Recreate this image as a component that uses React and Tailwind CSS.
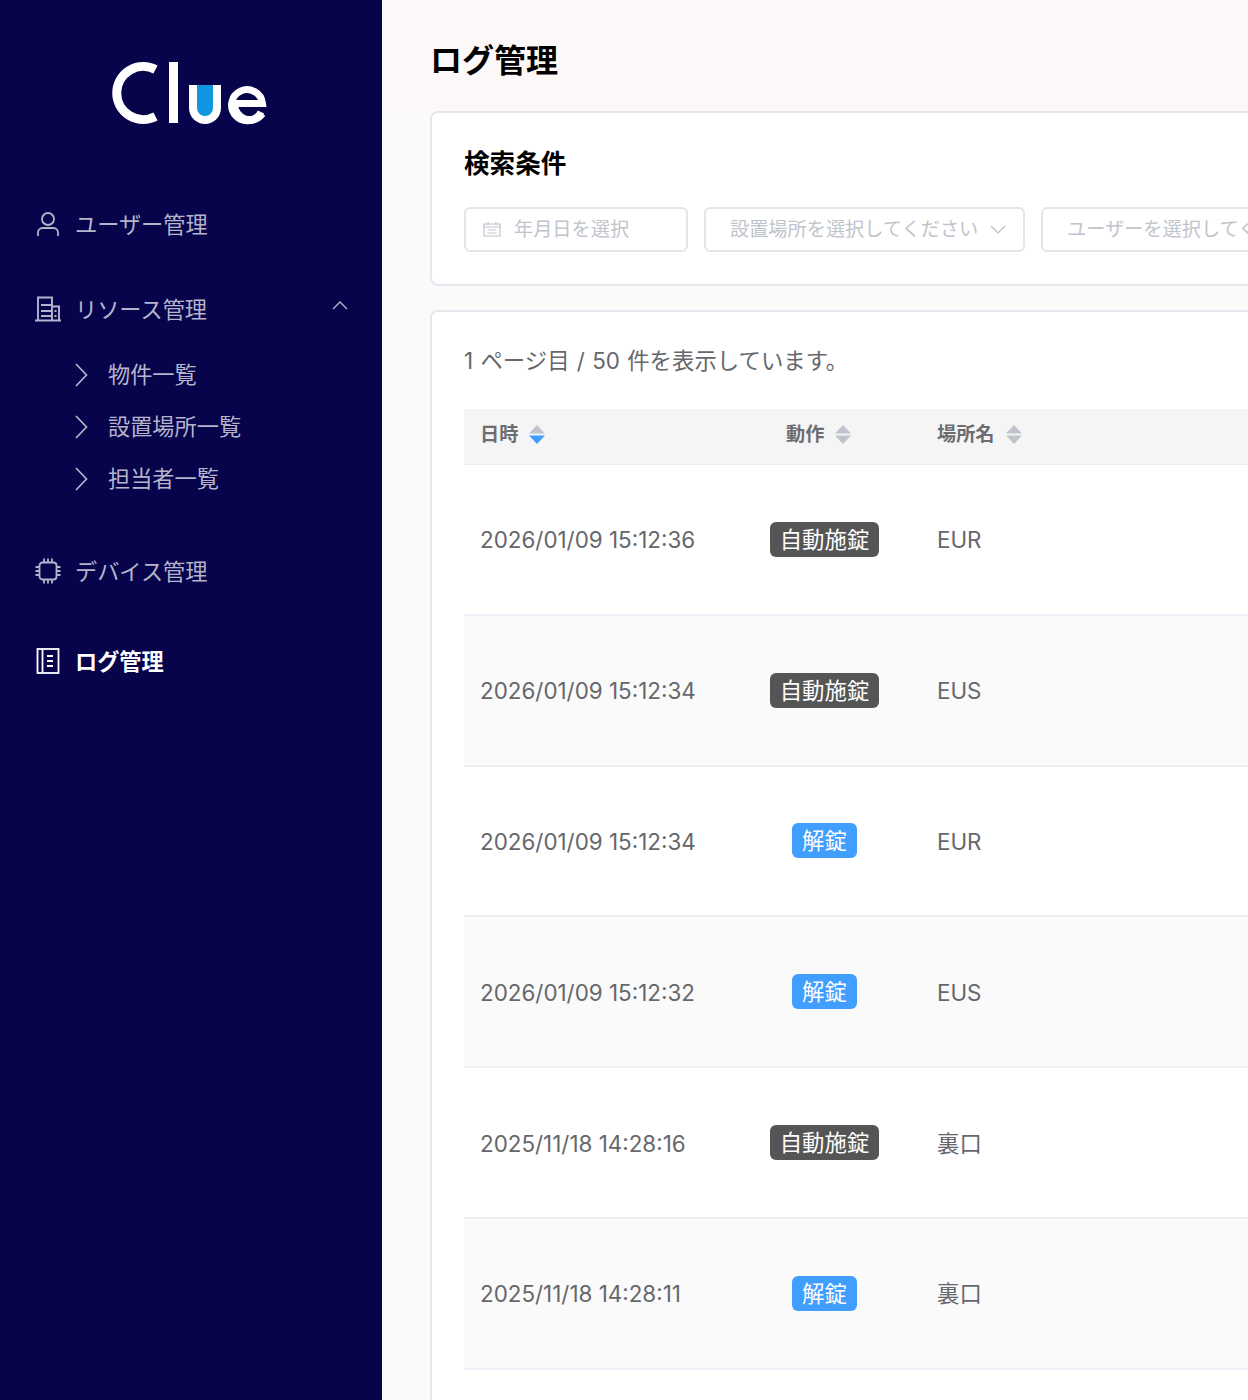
const FONT = "font-['Inter','Noto_Sans_CJK_JP',sans-serif]";

const rows = [
  { date: "2026/01/09 15:12:36", action: "lock", place: "EUR" },
  { date: "2026/01/09 15:12:34", action: "lock", place: "EUS" },
  { date: "2026/01/09 15:12:34", action: "unlock", place: "EUR" },
  { date: "2026/01/09 15:12:32", action: "unlock", place: "EUS" },
  { date: "2025/11/18 14:28:16", action: "lock", place: "裏口" },
  { date: "2025/11/18 14:28:11", action: "unlock", place: "裏口" },
  { date: "", action: "", place: "" },
];

function Logo() {
  return (
    <svg width="382" height="70" viewBox="0 58 382 70" role="img" aria-label="Clue">
      <path d="M155.5 69.5A26.5 26.5 0 1 0 155.5 116.5" fill="none" stroke="#fff" strokeWidth="9" />
      <rect x="169" y="62" width="9" height="61" fill="#fff" />
      <path d="M189 85H221V108A16 16 0 0 1 189 108Z" fill="#fff" />
      <path d="M197 85H213V108A8 8 0 0 1 197 108Z" fill="#1096e0" />
      <path d="M234 103.500H262.500A15.500 15.500 0 1 0 261 112" fill="none" stroke="#fff" strokeWidth="7" />
      <path d="M234 104A15.500 16 0 0 0 262 113.500" fill="none" stroke="#fff" strokeWidth="8" />
    </svg>
  );
}

function UserIcon() {
  return (
    <svg width="24" height="24" viewBox="0 0 24 24" fill="none" stroke="currentColor" strokeWidth="1.8">
      <circle cx="12" cy="7" r="6" />
      <path d="M2 24v-3.500A4.500 4.500 0 0 1 6.500 16h11a4.500 4.500 0 0 1 4.500 4.500V24" />
    </svg>
  );
}

function BuildingIcon() {
  return (
    <svg width="26" height="26" viewBox="0 0 26 26" fill="none" stroke="currentColor" strokeWidth="1.9">
      <path d="M0 24.500h26M3 24.500V1.500h14v23M17 10.500h7v14M6 9h11M6 15h11M6 20h11M19.500 15h2M19.500 20h2" />
    </svg>
  );
}

function ChipIcon() {
  return (
    <svg width="26" height="26" viewBox="0 0 26 26" fill="none" stroke="currentColor" strokeWidth="1.8">
      <rect x="4.500" y="4.500" width="17" height="17" rx="3" />
      <path d="M9 0.500v4M13 0.500v4M17 0.500v4M9 21.500v4M13 21.500v4M17 21.500v4M0.500 9h4M0.500 13h4M0.500 17h4M21.500 9h4M21.500 13h4M21.500 17h4" />
    </svg>
  );
}

function LogIcon() {
  return (
    <svg width="24" height="26" viewBox="0 0 24 26" fill="none" stroke="currentColor" strokeWidth="1.8">
      <rect x="1.500" y="1" width="21" height="24" />
      <path d="M6.500 1v24M11 8h6M11 13h6M11 18h6" />
    </svg>
  );
}

function Chevron({ up }) {
  return (
    <svg width="16" height="9" viewBox="0 0 16 9" fill="none" stroke="currentColor" strokeWidth="1.400">
      <path d={up ? "M1 8l7-7 7 7" : "M1 1l7 7 7-7"} />
    </svg>
  );
}

function SubItem({ label }) {
  return (
    <div className="flex items-center h-[52px] pl-[75px]">
      <svg width="13" height="24" viewBox="0 0 13 24" fill="none" stroke="currentColor" strokeWidth="1.700">
        <path d="M1 1l10.500 11L1 23" />
      </svg>
      <span className="ml-5">{label}</span>
    </div>
  );
}

function NavItem({ icon, label, className, children }) {
  return (
    <div className={"flex items-center h-14 pl-[35px] " + (className || "")}>
      <span className="flex justify-center w-[26px]">{icon}</span>
      <span className="ml-[14px] pt-px">{label}</span>
      {children}
    </div>
  );
}

function SortIcon({ active }) {
  return (
    <svg className="ml-[11px]" width="16" height="19" viewBox="0 0 16 19">
      <path d="M8 0l8 8.500H0z" fill="#c0c4cc" />
      <path d="M0 10.500h16L8 19z" fill={active ? "#409eff" : "#c0c4cc"} />
    </svg>
  );
}

function Badge({ action }) {
  if (action === "lock") {
    return (
      <span className="inline-block h-[35px] px-[10px] leading-[35px] rounded-md bg-[#555555] text-white text-[22.4px]">
        自動施錠
      </span>
    );
  }
  if (action === "unlock") {
    return (
      <span className="inline-block h-[35px] px-[10px] leading-[35px] rounded-md bg-[#409eff] text-white text-[22.4px]">
        解錠
      </span>
    );
  }
  return null;
}

export default function App() {
  return (
    <div className={"flex w-[1248px] h-[1400px] overflow-hidden bg-[#fafafa] " + FONT}>
      {/* サイドバー */}
      <aside className="w-[382px] shrink-0 bg-[#07044b] text-[#b5b4cb] text-[22.2px]">
        <div className="pt-[58px] h-[196px]">
          <Logo />
        </div>
        <NavItem icon={<UserIcon />} label="ユーザー管理" />
        <NavItem icon={<BuildingIcon />} label="リソース管理" className="relative mt-[29px]">
          <span className="absolute left-[332px] top-[20px]">
            <Chevron up />
          </span>
        </NavItem>
        <div className="mt-[12px] mb-[18px]">
          <SubItem label="物件一覧" />
          <SubItem label="設置場所一覧" />
          <SubItem label="担当者一覧" />
        </div>
        <NavItem icon={<ChipIcon />} label="デバイス管理" className="mt-[38px]" />
        <NavItem icon={<LogIcon />} label="ログ管理" className="mt-[34px] text-white font-bold" />
      </aside>

      {/* メイン */}
      <main className="flex-1 min-w-0 overflow-hidden">
        <div className="h-[111px] pl-12 pt-[11px] bg-[#fcf8f7] flex items-center">
          <h1 className="text-[32px] font-bold text-black whitespace-nowrap">ログ管理</h1>
        </div>

        <div className="pl-12 w-[1200px]">
          <section className="h-[175px] px-8 pt-[31px] bg-white border-2 border-[#e6e7ee] rounded-lg">
            <h2 className="text-[25.6px] leading-[40px] font-bold text-black">検索条件</h2>
            <div className="flex gap-4 mt-[23px] text-[19.2px] text-[#c0c4cc]">
              <div className="flex items-center w-[224px] h-[45px] pl-[17px] pb-px border-2 border-[#e4e5ec] rounded-md">
                <svg width="18" height="16" viewBox="0 0 18 16" fill="none" stroke="currentColor" strokeWidth="1.200">
                  <path d="M1 3h16v12H1zM1 6h16M5 1v3M13 1v3M4.500 9h9M4.500 12h9" />
                </svg>
                <span className="ml-[13px]">年月日を選択</span>
              </div>
              <div className="flex items-center w-[321px] h-[45px] pl-6 pb-px border-2 border-[#e4e5ec] rounded-md">
                <span>設置場所を選択してください</span>
                <span className="ml-3">
                  <Chevron />
                </span>
              </div>
              <div className="flex items-center w-[321px] h-[45px] pl-6 pb-px border-2 border-[#e4e5ec] rounded-md">
                <span className="whitespace-nowrap">ユーザーを選択してください</span>
              </div>
            </div>
          </section>

          <section className="h-[1200px] mt-6 px-8 pt-[34px] bg-white border-2 border-[#e6e7ee] rounded-lg text-[#65676b] text-[22.4px]">
            <p className="leading-[30px] [word-spacing:1px]">1 ページ目 / 50 件を表示しています。</p>
            <table className="mt-[33px] w-full table-fixed border-collapse">
              <colgroup>
                <col className="w-[264px]" />
                <col className="w-[193px]" />
                <col />
              </colgroup>
              <thead>
                <tr className="h-[55px] bg-[#f5f5f5] border-b border-[#ebeef5] text-[19.2px] text-[#6b6d71]">
                  <th className="px-4 pb-[3px] font-bold text-left">
                    <span className="flex items-center">
                      日時
                      <SortIcon active />
                    </span>
                  </th>
                  <th className="px-4 pb-[3px] font-bold">
                    <span className="flex items-center pl-[42px]">
                      動作
                      <SortIcon />
                    </span>
                  </th>
                  <th className="px-4 pb-[3px] font-bold text-left">
                    <span className="flex items-center">
                      場所名
                      <SortIcon />
                    </span>
                  </th>
                </tr>
              </thead>
              <tbody>
                {rows.map((row, i) => (
                  <tr
                    key={i}
                    className={"h-[150.75px] border-b-2 border-[#eeeff6] " + (i % 2 === 1 ? "bg-[#fafafa]" : "")}
                  >
                    <td className="px-4 pt-[2px]">{row.date}</td>
                    <td className="px-4 text-center">
                      <Badge action={row.action} />
                    </td>
                    <td className="px-4 pt-[2px]">{row.place}</td>
                  </tr>
                ))}
              </tbody>
            </table>
          </section>
        </div>
      </main>
    </div>
  );
}
